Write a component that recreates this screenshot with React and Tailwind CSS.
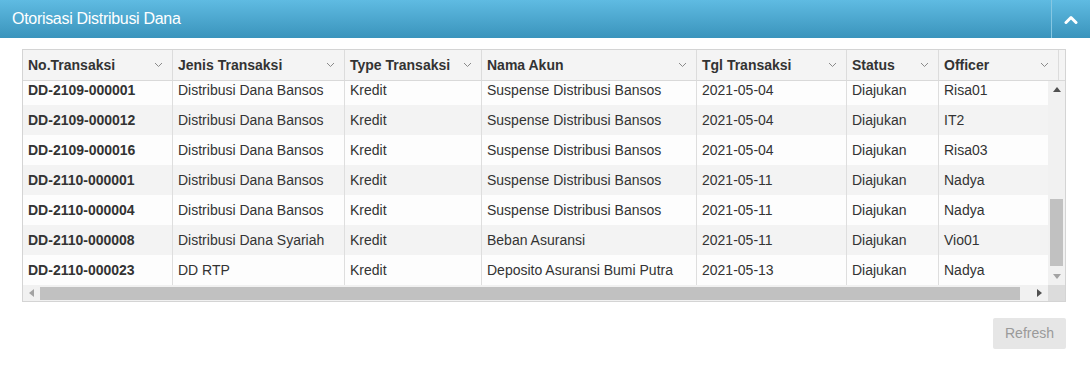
import React from 'react';

const columns = [
  { key: 'no', label: 'No.Transaksi', w: 'w-[150px]' },
  { key: 'jenis', label: 'Jenis Transaksi', w: 'w-[172px]' },
  { key: 'type', label: 'Type Transaksi', w: 'w-[137px]' },
  { key: 'akun', label: 'Nama Akun', w: 'w-[215px]' },
  { key: 'tgl', label: 'Tgl Transaksi', w: 'w-[150px]' },
  { key: 'status', label: 'Status', w: 'w-[92px]' },
  { key: 'officer', label: 'Officer', w: 'w-[120px]' },
];

const rows = [
  ['DD-2109-000001', 'Distribusi Dana Bansos', 'Kredit', 'Suspense Distribusi Bansos', '2021-05-04', 'Diajukan', 'Risa01'],
  ['DD-2109-000012', 'Distribusi Dana Bansos', 'Kredit', 'Suspense Distribusi Bansos', '2021-05-04', 'Diajukan', 'IT2'],
  ['DD-2109-000016', 'Distribusi Dana Bansos', 'Kredit', 'Suspense Distribusi Bansos', '2021-05-04', 'Diajukan', 'Risa03'],
  ['DD-2110-000001', 'Distribusi Dana Bansos', 'Kredit', 'Suspense Distribusi Bansos', '2021-05-11', 'Diajukan', 'Nadya'],
  ['DD-2110-000004', 'Distribusi Dana Bansos', 'Kredit', 'Suspense Distribusi Bansos', '2021-05-11', 'Diajukan', 'Nadya'],
  ['DD-2110-000008', 'Distribusi Dana Syariah', 'Kredit', 'Beban Asuransi', '2021-05-11', 'Diajukan', 'Vio01'],
  ['DD-2110-000023', 'DD RTP', 'Kredit', 'Deposito Asuransi Bumi Putra', '2021-05-13', 'Diajukan', 'Nadya'],
];

const SortIcon = () => (
  <svg width="9" height="6" viewBox="0 0 9 6" className="shrink-0">
    <polyline points="1,1 4.5,4.5 8,1" fill="none" stroke="#8a8a8a" strokeWidth="1" />
  </svg>
);

export default function App() {
  return (
    <div className="w-[1090px] h-[374px] bg-white text-[#333] font-['Liberation_Sans',Arial,sans-serif]">
      {/* Panel header */}
      <div className="h-[38px] flex items-stretch bg-gradient-to-b from-[#5fbbe2] to-[#3a94bc]">
        <div className="flex-1 flex items-center pl-[12px] text-white text-[16px] tracking-[-0.3px]">
          Otorisasi Distribusi Dana
        </div>
        <div className="w-[39px] border-l border-[#86c7e2] flex items-center justify-center">
          <svg width="14" height="9" viewBox="0 0 14 9">
            <polyline points="2,7.5 7,2.5 12,7.5" fill="none" stroke="#fff" strokeWidth="3" strokeLinecap="round" strokeLinejoin="round" />
          </svg>
        </div>
      </div>

      <div className="w-[1044px] ml-[22px] pt-[11px]">
        {/* Grid */}
        <div className="w-[1044px] border border-[#d4d4d4] text-[14px]">
          {/* Header row */}
          <div className="flex h-[31px] bg-[#f4f4f4] border-b border-[#d9d9d9]">
            {columns.map((c) => (
              <div key={c.key} className={`${c.w} shrink-0 flex items-center justify-between pl-[5px] pr-[9px] border-r border-[#dcdcdc] font-bold`}>
                <span>{c.label}</span>
                <SortIcon />
              </div>
            ))}
            <div className="flex-1" />
          </div>

          {/* Body */}
          <div className="flex h-[204px]">
            <div className="flex-1 overflow-hidden">
              <div className="-mt-[6px]">
                {rows.map((r, i) => (
                  <div key={r[0]} className={`flex h-[30px] ${i % 2 === 0 ? 'bg-[#fdfdfd]' : 'bg-[#f3f3f3]'}`}>
                    {r.map((v, j) => (
                      <div key={j} className={`${columns[j].w} shrink-0 flex items-center pl-[5px] border-r border-[#dedede] whitespace-nowrap ${j === 0 ? 'font-bold' : ''}`}>
                        {v}
                      </div>
                    ))}
                  </div>
                ))}
              </div>
            </div>
            {/* Vertical scrollbar */}
            <div className="w-[17px] bg-[#f1f1f1] flex flex-col items-center">
              <div className="h-[17px] flex items-center justify-center">
                <svg width="8" height="5" viewBox="0 0 8 5"><polygon points="0,5 4,0 8,5" fill="#505050" /></svg>
              </div>
              <div className="h-[101px]" />
              <div className="w-[13px] h-[67px] bg-[#c1c1c1]" />
              <div className="flex-1" />
              <div className="h-[17px] flex items-center justify-center">
                <svg width="8" height="5" viewBox="0 0 8 5"><polygon points="0,0 8,0 4,5" fill="#a3a3a3" /></svg>
              </div>
            </div>
          </div>

          {/* Horizontal scrollbar */}
          <div className="flex h-[16px] bg-[#f1f1f1]">
            <div className="flex-1 flex items-center">
              <div className="w-[17px] flex items-center justify-center">
                <svg width="5" height="8" viewBox="0 0 5 8"><polygon points="5,0 5,8 0,4" fill="#a3a3a3" /></svg>
              </div>
              <div className="w-[980px] h-[13px] bg-[#c1c1c1]" />
              <div className="flex-1 flex items-center justify-end pr-[6px]">
                <svg width="5" height="8" viewBox="0 0 5 8"><polygon points="0,0 5,4 0,8" fill="#505050" /></svg>
              </div>
            </div>
            <div className="w-[17px] bg-[#dcdcdc]" />
          </div>
        </div>

        {/* Footer */}
        <div className="flex justify-end pt-[16px]">
          <button className="w-[73px] h-[31px] rounded-[2px] bg-[#e6e6e6] text-[#9a9a9a] text-[14px]">
            Refresh
          </button>
        </div>
      </div>
    </div>
  );
}
